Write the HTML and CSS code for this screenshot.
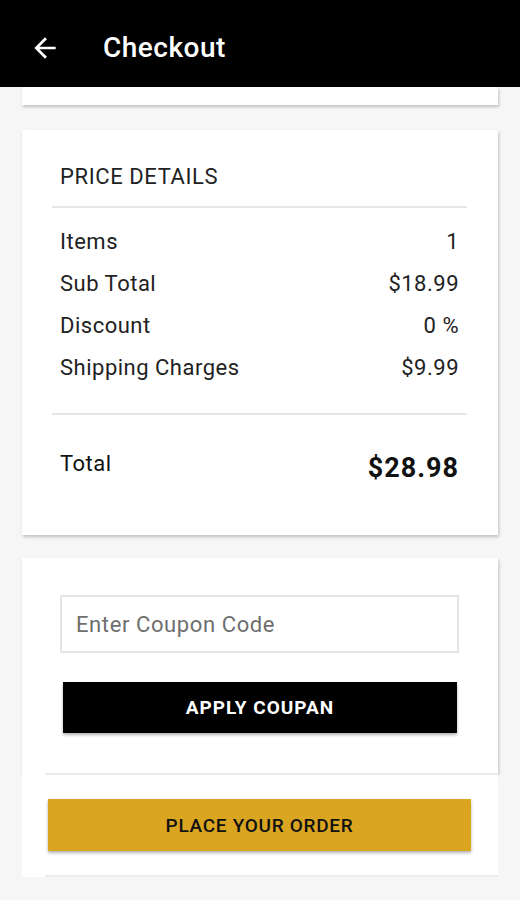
FILE: index.html
```html
<!DOCTYPE html>
<html>
<head>
<meta charset="utf-8">
<link rel="stylesheet" href="styles.css">
</head>
<body>
<header class="appbar">
  <svg class="back" viewBox="0 0 24 24" width="32" height="32"><path fill="#fff" d="M20 11H7.83l5.59-5.59L12 4l-8 8 8 8 1.41-1.41L7.83 13H20v-2z"/></svg>
  <h1 class="title">Checkout</h1>
</header>
<main class="content">
  <div class="card card-stub"></div>
  <section class="card price-card">
    <div class="price-head">PRICE DETAILS</div>
    <div class="rows">
      <div class="row"><span>Items</span><span>1</span></div>
      <div class="row"><span>Sub Total</span><span>$18.99</span></div>
      <div class="row"><span>Discount</span><span>0 %</span></div>
      <div class="row"><span>Shipping Charges</span><span>$9.99</span></div>
    </div>
    <div class="total-row"><span class="total-label">Total</span><span class="total-amt">$28.98</span></div>
  </section>
  <section class="card coupon-card">
    <div class="coupon-input">Enter Coupon Code</div>
    <button class="apply-btn">APPLY COUPAN</button>
  </section>
  <footer class="footer">
    <div class="footer-inner">
      <button class="order-btn">PLACE YOUR ORDER</button>
    </div>
  </footer>
</main>
</body>
</html>
```
FILE: styles.css
```css
* { box-sizing: border-box; }
html, body { margin: 0; padding: 0; }
body {
  background: #f6f6f6;
  font-family: Roboto, "Liberation Sans", sans-serif;
  color: #222;
  width: 520px;
  height: 900px;
  overflow: hidden;
}
.appbar {
  height: 87px;
  background: #000;
  display: flex;
  align-items: center;
  padding-left: 29px;
  padding-top: 10px;
}
.back { display: block; margin-top: -2px; }
.title {
  margin: -2px 0 0 42px;
  color: #fff;
  font-size: 28px;
  font-weight: 500;
  letter-spacing: 0.5px;
}
.content {
  padding: 0 22px;
}
.card {
  background: #fff;
  box-shadow: 1px 2px 3px rgba(0,0,0,0.22);
}
.card-stub { height: 18px; }
.price-card {
  margin-top: 25px;
  padding: 35px 31px 0 30px;
  height: 405px;
}
.price-head {
  font-size: 22px;
  letter-spacing: 0.6px;
  line-height: 24px;
  padding: 0 8px 17px;
  border-bottom: 2px solid #e6e6e6;
  color: #222;
}
.rows {
  padding: 13px 8px 24px;
  border-bottom: 2px solid #e6e6e6;
}
.row {
  display: flex;
  justify-content: space-between;
  font-size: 22px;
  letter-spacing: 0.5px;
  line-height: 42px;
  color: #222;
}
.total-row {
  display: flex;
  justify-content: space-between;
  align-items: flex-start;
  padding: 37px 8px 0;
}
.total-label { font-size: 22px; letter-spacing: 0.5px; line-height: 24px; color: #111; }
.total-amt { font-size: 27px; line-height: 30px; font-weight: 700; color: #111; margin-top: 1px; letter-spacing: 1px; }
.coupon-card {
  margin-top: 23px;
  padding: 37px 39px 40px 38px;
  height: 215px;
}
.coupon-input {
  height: 58px;
  border: 2px solid #e4e4e4;
  font-size: 22px;
  letter-spacing: 0.6px;
  color: #6e6e6e;
  display: flex;
  align-items: center;
  padding-left: 14px;
}
.apply-btn {
  display: block;
  margin: 29px 2px 0 3px;
  width: 394px;
  height: 51px;
  background: #000;
  border: none;
  color: #fff;
  font-family: Roboto, "Liberation Sans", sans-serif;
  font-size: 19px;
  letter-spacing: 1px;
  font-weight: 700;
  box-shadow: 0 2px 3px rgba(0,0,0,0.3);
}
.footer {
  background: #fff;
}
.footer-inner {
  margin-left: 23px;
  border-top: 2px solid #ececec;
  border-bottom: 2px solid #ececec;
  padding: 24px 0 24px 3px;
}
.order-btn {
  display: block;
  width: 423px;
  height: 52px;
  background: #daa520;
  border: none;
  color: #111;
  font-family: Roboto, "Liberation Sans", sans-serif;
  font-size: 19px;
  letter-spacing: 0.7px;
  font-weight: 500;
  box-shadow: 0 2px 3px rgba(0,0,0,0.3);
}
```
